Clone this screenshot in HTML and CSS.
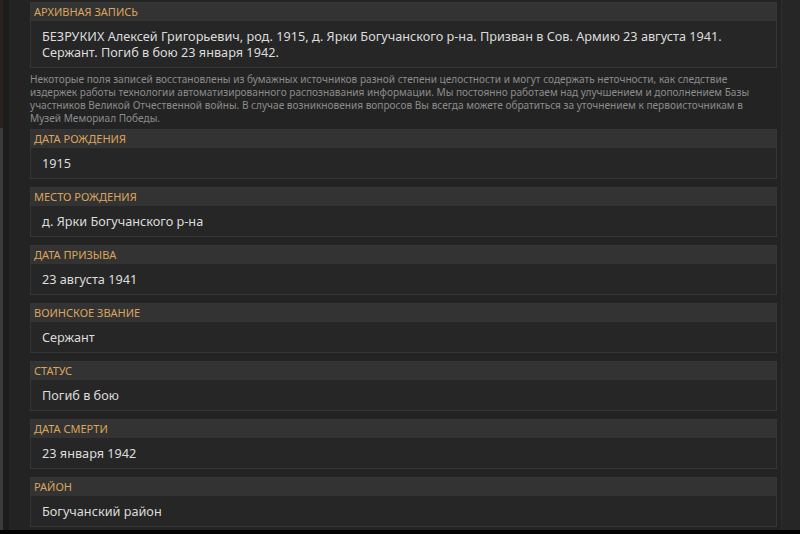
FILE: index.html
```html
<!DOCTYPE html>
<html>
<head>
    <title>Архивная запись</title>
    <link rel="stylesheet" href="styles.css">
</head>
<body>
    <div class="page">
        <div class="edge"></div>
        <div class="content">
            <div class="card">
                <div class="card-title">Архивная запись</div>
                <div class="card-body">БЕЗРУКИХ Алексей Григорьевич, род. 1915, д. Ярки Богучанского р-на. Призван в Сов. Армию 23 августа 1941. Сержант. Погиб в бою 23 января 1942.</div>
            </div>
            <p class="note">Некоторые поля записей восстановлены из бумажных источников разной степени целостности и могут содержать неточности, как следствие издержек работы технологии автоматизированного распознавания информации. Мы постоянно работаем над улучшением и дополнением Базы участников Великой Отчественной войны. В случае возникновения вопросов Вы всегда можете обратиться за уточнением к первоисточникам в Музей Мемориал Победы.</p>
            <div class="card">
                <div class="card-title">Дата рождения</div>
                <div class="card-body">1915</div>
            </div>
            <div class="card">
                <div class="card-title">Место рождения</div>
                <div class="card-body">д. Ярки Богучанского р-на</div>
            </div>
            <div class="card">
                <div class="card-title">Дата призыва</div>
                <div class="card-body">23 августа 1941</div>
            </div>
            <div class="card">
                <div class="card-title">Воинское звание</div>
                <div class="card-body">Сержант</div>
            </div>
            <div class="card">
                <div class="card-title">Статус</div>
                <div class="card-body">Погиб в бою</div>
            </div>
            <div class="card">
                <div class="card-title">Дата смерти</div>
                <div class="card-body">23 января 1942</div>
            </div>
            <div class="card">
                <div class="card-title">Район</div>
                <div class="card-body">Богучанский район</div>
            </div>
        </div>
        <div class="track"></div>
    </div>
</body>
</html>
```

FILE: styles.css
```css
html, body {
    margin: 0;
    height: 100%;
    overflow: hidden;
}
body {
    font-family: "Noto Sans", "Open Sans", sans-serif;
    background-color: #000;
    color: #dcdcdc;
}
.page {
    display: flex;
    height: 530px;
    background-color: #232323;
}
.edge {
    width: 30px;
    flex-shrink: 0;
    background:
        linear-gradient(to bottom, #2a211e 0, #2a211e 128px, #3b3b3b 128px) 0 0 / 3px 100% no-repeat,
        linear-gradient(to right, #1c1c1c 0, #1c1c1c 9px, #232323 9px);
}
.content {
    flex: 1;
    padding-top: 2px;
}
.track {
    width: 18px;
    flex-shrink: 0;
    margin-left: 4px;
    border-left: 1px solid #2c2c2c;
    background-color: #262626;
}
.card {
    border: 1px solid #363636;
    margin-bottom: 8px;
}
.card-title {
    background-color: #333333;
    color: #dca55c;
    font-size: 11px;
    line-height: 18px;
    padding-left: 3px;
    text-transform: uppercase;
}
.card-body {
    background-color: #262626;
    font-size: 12.7px;
    line-height: 16px;
    padding: 7px 11px;
}
.note {
    color: #8c8c8c;
    font-size: 10.1px;
    line-height: 13px;
    margin: -3px 20px 4px 0;
}
```
